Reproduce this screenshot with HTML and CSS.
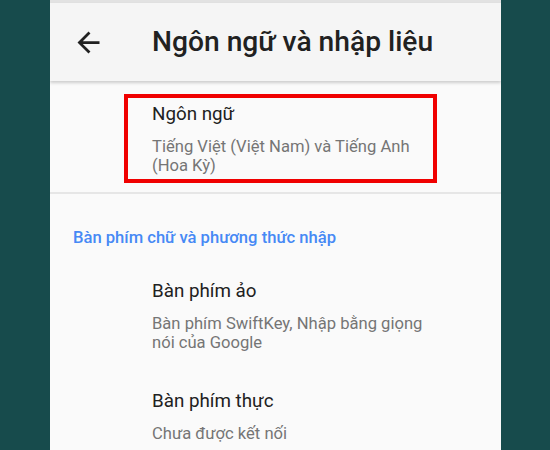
FILE: index.html
```html
<!DOCTYPE html>
<html lang="vi">
<head>
<meta charset="utf-8">
<link rel="stylesheet" href="styles.css">
</head>
<body>
<div class="page">
  <div class="screen">
    <div class="status-edge"></div>
    <header class="appbar">
      <svg class="back" viewBox="0 0 24 24" width="33" height="33" aria-hidden="true">
        <path d="M20 11H7.83l5.59-5.59L12 4l-8 8 8 8 1.41-1.41L7.83 13H20v-2z" fill="#212121"/>
      </svg>
      <h1 class="title">Ngôn ngữ và nhập liệu</h1>
    </header>
    <div class="item highlighted">
      <div class="item-title">Ngôn ngữ</div>
      <div class="item-sub">Tiếng Việt (Việt Nam) và Tiếng Anh (Hoa Kỳ)</div>
    </div>
    <div class="divider"></div>
    <div class="section-header">Bàn phím chữ và phương thức nhập</div>
    <div class="item plain first">
      <div class="item-title">Bàn phím ảo</div>
      <div class="item-sub">Bàn phím SwiftKey, Nhập bằng giọng nói của Google</div>
    </div>
    <div class="item plain second">
      <div class="item-title">Bàn phím thực</div>
      <div class="item-sub">Chưa được kết nối</div>
    </div>
  </div>
</div>
</body>
</html>
```

FILE: styles.css
```css
html, body {
  margin: 0;
  padding: 0;
  height: 100%;
  background: #174b4c;
  overflow: hidden;
}

.page {
  display: flex;
  padding-left: 50px;
  height: 100%;
}

.screen {
  width: 451px;
  height: 100%;
  background: #fafafa;
  font-family: Roboto, "Noto Sans", "Liberation Sans", sans-serif;
  overflow: hidden;
}

.status-edge {
  height: 3px;
  background: #e2e2e2;
}

.appbar {
  height: 78px;
  background: #f5f5f5;
  display: flex;
  align-items: center;
  box-shadow: 0 2px 3px rgba(0, 0, 0, 0.18);
  position: relative;
}

.back {
  margin-left: 22px;
  flex: none;
}

.title {
  margin: 0 0 0 47px;
  font-size: 28.2px;
  font-weight: 500;
  color: #212121;
  line-height: 32px;
}

.item {
  color: #212121;
}

.item-title {
  font-size: 18.8px;
  line-height: 24px;
  color: #212121;
}

.item-sub {
  font-size: 16.6px;
  line-height: 19px;
  color: #757575;
  margin-top: 11px;
  width: 280px;
}

.highlighted {
  margin: 13px 0 0 74px;
  width: 313px;
  box-sizing: border-box;
  border: 4px solid #f00000;
  padding: 4px 0 4px 24px;
}

.divider {
  height: 2px;
  background: #e6e6e6;
  margin-top: 9px;
}

.section-header {
  margin-top: 34px;
  padding-left: 23px;
  font-size: 16.6px;
  line-height: 20px;
  font-weight: 500;
  color: #4689f5;
}

.plain {
  padding-left: 102px;
}

.first {
  margin-top: 31px;
}

.second {
  margin-top: 37px;
}
```
